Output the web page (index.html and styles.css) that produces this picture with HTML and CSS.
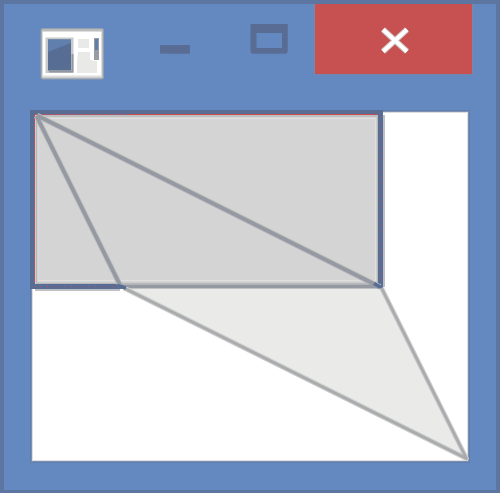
FILE: index.html
```html
<!DOCTYPE html>
<html lang="en">
<head>
<meta charset="utf-8">
<title>Window</title>
<link rel="stylesheet" href="styles.css">
</head>
<body>
<div class="window">
  <header class="titlebar">
    <svg class="app-icon" viewBox="40 27 65 53" aria-hidden="true">
      <rect class="icon-edge" x="41" y="28.500" width="62.500" height="50.500" rx="1.500"/>
      <rect class="icon-paper" x="42.500" y="31.500" width="59" height="45.500"/>
      <path class="icon-shade" d="M43 76.500H101"/>
      <rect class="icon-frame" x="45.500" y="37.500" width="28" height="35.500"/>
      <rect class="icon-screen" x="48" y="39.500" width="23" height="31"/>
      <path class="icon-glare" d="M48 39.500H71V43L48 52Z"/>
      <path class="icon-lower" d="M49 71.500H72.500V54"/>
      <path class="icon-tile" d="M78 39H89V48H78ZM78 52H90V60L97 61V73H77V62Z"/>
      <path class="icon-slot" d="M96.500 38V60"/>
      <path class="icon-slot-top" d="M96.500 39V50"/>
    </svg>
    <div class="controls">
      <button class="control minimize" aria-label="Minimize">
        <svg width="32" height="11" viewBox="159 44 32 11"><rect class="glyph" x="160" y="45" width="30" height="8.800" rx="1"/></svg>
      </button>
      <button class="control maximize" aria-label="Maximize">
        <svg width="38" height="30" viewBox="250 24 38 30"><path class="glyph" fill-rule="evenodd" d="M251 24H287.700V52L286 53.700H252L250.500 52V25ZM256.500 33V48H282V33Z"/></svg>
      </button>
      <button class="control close" aria-label="Close">
        <svg width="30" height="28" viewBox="380 27 30 28"><path class="cross-edge" d="M383 29.500L407 51.500M407 29.500L383 51.500"/><path class="cross" d="M383 29.500L407 51.500M407 29.500L383 51.500"/></svg>
      </button>
    </div>
  </header>
  <main class="client">
    <svg class="canvas" viewBox="32 112 436 349" role="img" aria-label="Rectangle and skewed shape">
      <rect class="panel" x="33" y="113" width="346.500" height="173.500"/>
      <path class="panel-highlight" d="M38 281V118.500H375.500V280.500H38Z"/>
      <path class="skewed" d="M121 287H380.500L466.500 458.500Z"/>
      <path class="inner-edge" d="M36.500 283.500V116H377.500V283.500H36.500"/>
      <path class="outer-soft" d="M35 290H120M384 115V287"/>
      <path class="blue-edge" d="M123 286.500H32.500V112.500H380.500V288"/>
      <path class="red-edge" d="M34.500 282V114.500H128"/>
      <path class="red-strong" d="M128 114.500H377"/>
      <path class="red-dots" d="M35 286.500H120M381.500 117V284"/>
      <path class="line-soft" d="M37 115.500L380 287M36.500 116L121 287"/>
      <path class="line" d="M37 115.500L380 287M36.500 116L121 287M121 286.500H378"/>
      <path class="outline-soft" d="M124 288L466.500 458.500L381.500 288"/>
      <path class="outline" d="M124 288L466.500 458.500L381.500 288"/>
      <path class="joint" d="M117 285.500L126 288M374 283.500L381 287.500"/>
    </svg>
  </main>
</div>
</body>
</html>
```
FILE: styles.css
```css
* { box-sizing: border-box; }

body { margin: 0; overflow: hidden; }

.window {
  width: 500px;
  height: 493px;
  padding: 0 28px;
  border: 4px solid #5d75a1;
  border-bottom-width: 3px;
  background: #6488c0;
}

.titlebar {
  display: flex;
  height: 107px;
  margin-right: -4px;
}

.app-icon {
  width: 65px;
  height: 53px;
  margin: 23px 0 0 8px;
}

.icon-edge { fill: #b9bbbc; stroke: #929fae; stroke-width: 1; }
.icon-paper { fill: #fff; }
.icon-shade { stroke: #dedede; stroke-width: 2; }
.icon-frame { fill: #c8c9c9; }
.icon-screen { fill: #586d94; }
.icon-glare { fill: #607fac; }
.icon-lower { fill: none; stroke: #9298a1; stroke-width: 2; }
.icon-tile { fill: #e9e9e8; }
.icon-slot { stroke: #989da4; stroke-width: 5; }
.icon-slot-top { stroke: #607dac; stroke-width: 3; }

.controls {
  display: flex;
  margin-left: auto;
}

.control {
  display: flex;
  justify-content: center;
  align-items: flex-start;
  height: 69.500px;
  padding: 0;
  border: 0;
  background: none;
}

.control svg { display: block; flex: none; }

.minimize { width: 91px; padding: 40px 0 0 0; justify-content: flex-start; }
.maximize { width: 65px; padding-top: 20px; justify-content: flex-start; }

.close {
  width: 157px;
  padding-top: 23px;
  padding-left: 3px;
  background: #c75050;
  box-shadow: 0 0 0 1px #8287a1;
  clip-path: inset(0 -1px -1px -1px);
}

.glyph { fill: #596d94; }
.cross, .cross-edge { fill: none; stroke-linecap: butt; }
.cross-edge { stroke: #d0bcbc; stroke-width: 6; }
.cross { stroke: #fff; stroke-width: 4; }

.client {
  width: 436px;
  height: 349px;
  margin-top: 1px;
  background: #fff;
  box-shadow: inset 0 0 0 1px #dedede, 0 0 0 1px #7c91b4, 0 0 0 2px #607ead;
}

.canvas {
  display: block;
  width: 436px;
  height: 349px;
  overflow: visible;
}

.panel { fill: #d4d4d4; }
.skewed { fill: #eaeae9; }
.panel-highlight { fill: none; stroke: #e0e0e0; stroke-width: 1; }
.inner-edge { fill: none; stroke: #b6b8bb; stroke-width: 1.500; }
.outer-soft { fill: none; stroke: #bfc0c3; stroke-width: 2; }
.blue-edge { fill: none; stroke: #596d94; stroke-width: 5; }
.red-edge { fill: none; stroke: #c94f58; stroke-width: 1; stroke-dasharray: 2 1; }
.red-strong { stroke: #c94b50; stroke-width: 1; }
.red-dots { fill: none; stroke: #bd5363; stroke-width: 1; stroke-dasharray: 1 5; }
.line-soft { fill: none; stroke: #bcbdbf; stroke-width: 5.500; }
.line { fill: none; stroke: #9499a2; stroke-width: 3.800; }
.outline-soft { fill: none; stroke: #cdcdcd; stroke-width: 4.800; stroke-linejoin: round; }
.outline { fill: none; stroke: #a9abad; stroke-width: 2.800; stroke-linejoin: round; }
.joint { stroke: #596d94; stroke-width: 3.500; }
```
